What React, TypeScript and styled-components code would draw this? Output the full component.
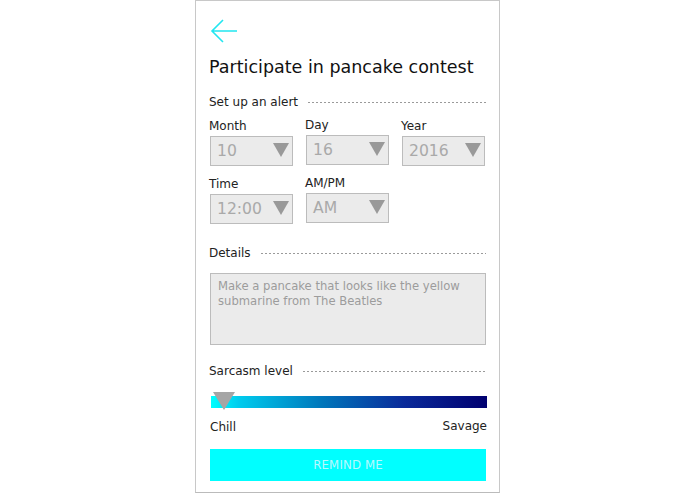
import React from "react";
import styled, { createGlobalStyle } from "styled-components";

const Global = createGlobalStyle`
  html, body { margin: 0; padding: 0; background: #fff; }
  body { font-family: "DejaVu Sans", Verdana, sans-serif; }
`;

const Page = styled.div`
  display: flex;
  justify-content: center;
`;

const Card = styled.div`
  box-sizing: border-box;
  width: 305px;
  height: 493px;
  border: 1px solid #c8c8c8;
  border-bottom-color: #bbb;
  padding: 15px 13px 0 14px;
  display: flex;
  flex-direction: column;
`;

const Back = styled.div`
  height: 30px;
  display: flex;
  align-items: center;
`;

const Title = styled.h1`
  margin: 9px 0 0 -1px;
  font-size: 17.5px;
  font-weight: normal;
  color: #111;
  line-height: 24px;
`;

const Section = styled.div<{ $top: number }>`
  display: flex;
  align-items: center;
  gap: 10px;
  margin-top: ${(p) => p.$top}px;
  margin-left: -1px;
  font-size: 12px;
  color: #222;
  line-height: 16px;
`;

const Dash = styled.div`
  flex: 1;
  height: 1px;
  margin-top: 1px;
  background: repeating-linear-gradient(to right, #9a9a9a 0 2px, transparent 2px 4px);
`;

const Row = styled.div<{ $top: number }>`
  display: grid;
  grid-template-columns: repeat(3, 83px);
  column-gap: 13px;
  margin-top: ${(p) => p.$top}px;
`;

const Field = styled.div<{ $lift?: number }>`
  display: flex;
  flex-direction: column;
  margin-top: ${(p) => -(p.$lift || 0)}px;
`;

const Label = styled.div`
  font-size: 12px;
  line-height: 16px;
  color: #222;
  margin-bottom: 2px;
  margin-left: -1px;
`;

const Select = styled.div`
  box-sizing: border-box;
  height: 30px;
  border: 1px solid #bcbcbc;
  background: #ebebeb;
  display: flex;
  align-items: center;
  justify-content: space-between;
  padding: 0 3px 0 6px;
  color: #a9a9a9;
  font-size: 15.6px;
`;

const Caret = styled.svg`
  display: block;
  margin-top: -2px;
`;

const TextArea = styled.div`
  box-sizing: border-box;
  margin-top: 12px;
  height: 72px;
  border: 1px solid #bcbcbc;
  background: #ebebeb;
  padding: 5px 7px;
  color: #9c9c9c;
  font-size: 11.6px;
  line-height: 15px;
`;

const SliderWrap = styled.div`
  position: relative;
  margin-top: 13px;
  height: 18px;
`;

const Bar = styled.div`
  position: absolute;
  left: 1px;
  right: -1px;
  top: 4px;
  height: 12px;
  background: linear-gradient(to right, #00ffff 0%, #00ccee 10%, #0077bb 40%, #0a2a9a 70%, #000070 100%);
`;

const Thumb = styled.svg`
  position: absolute;
  left: 3px;
  top: 0;
`;

const Ends = styled.div`
  display: flex;
  justify-content: space-between;
  align-items: flex-end;
  margin-top: 8px;
  margin-right: -1px;
  font-size: 12px;
  color: #222;
  line-height: 16px;
`;

const Chill = styled.span`
  position: relative;
  top: 1px;
`;

const Button = styled.div`
  margin-top: 15px;
  height: 32px;
  background: #00ffff;
  color: #b8f8ff;
  font-size: 11.8px;
  display: flex;
  align-items: center;
  justify-content: center;
  letter-spacing: 0.1px;
`;

const Arrow = () => (
  <svg width="28" height="26" viewBox="0 0 28 26">
    <path d="M27 13 H2 M13 2 L2 13 L13 24" fill="none" stroke="#22e6f0" strokeWidth="1.6" />
  </svg>
);

const Tri = () => (
  <Caret width="16" height="14" viewBox="0 0 16 14">
    <path d="M0 0 H16 L8 14 Z" fill="#999" />
  </Caret>
);

const Sel = ({ label, value, lift }: { label: string; value: string; lift?: number }) => (
  <Field $lift={lift}>
    <Label>{label}</Label>
    <Select>
      <span>{value}</span>
      <Tri />
    </Select>
  </Field>
);

export default function App() {
  return (
    <Page>
      <Global />
      <Card>
        <Back>
          <Arrow />
        </Back>
        <Title>Participate in pancake contest</Title>
        <Section $top={15}>
          <span>Set up an alert</span>
          <Dash />
        </Section>
        <Row $top={8}>
          <Sel label="Month" value="10" />
          <Sel label="Day" value="16" lift={1} />
          <Sel label="Year" value="2016" />
        </Row>
        <Row $top={10}>
          <Sel label="Time" value="12:00" />
          <Sel label="AM/PM" value="AM" lift={1} />
        </Row>
        <Section $top={21}>
          <span>Details</span>
          <Dash />
        </Section>
        <TextArea>Make a pancake that looks like the yellow submarine from The Beatles</TextArea>
        <Section $top={18}>
          <span>Sarcasm level</span>
          <Dash />
        </Section>
        <SliderWrap>
          <Bar />
          <Thumb width="22" height="18" viewBox="0 0 22 18">
            <path d="M0 0 H22 L11 18 Z" fill="#a5a5a5" />
          </Thumb>
        </SliderWrap>
        <Ends>
          <Chill>Chill</Chill>
          <span>Savage</span>
        </Ends>
        <Button>REMIND ME</Button>
      </Card>
    </Page>
  );
}
